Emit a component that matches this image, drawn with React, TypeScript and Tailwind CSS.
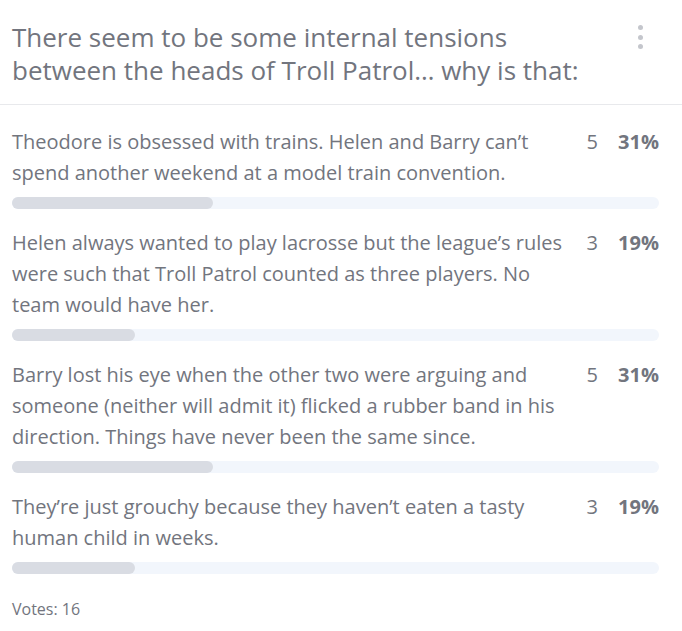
import { useState } from "react";

const options = [
  { text: "Theodore is obsessed with trains. Helen and Barry can’t spend another weekend at a model train convention.", votes: 5 },
  { text: "Helen always wanted to play lacrosse but the league’s rules were such that Troll Patrol counted as three players. No team would have her.", votes: 3 },
  { text: "Barry lost his eye when the other two were arguing and someone (neither will admit it) flicked a rubber band in his direction. Things have never been the same since.", votes: 5 },
  { text: "They’re just grouchy because they haven’t eaten a tasty human child in weeks.", votes: 3 },
];

export default function App() {
  const [menuOpen, setMenuOpen] = useState(false);
  const total = options.reduce((s, o) => s + o.votes, 0);

  return (
    <div className="w-[682px] min-h-[631px] bg-white text-[#72757e]" style={{ fontFamily: '"Open Sans", "Noto Sans", sans-serif' }}>
      <div className="flex items-start justify-between border-b border-[#e8e9ec] pl-3 pr-[39px] pt-[21px] pb-[17px]">
        <h1 className="max-w-[592px] text-[26px] leading-[33px] font-normal">
          There seem to be some internal tensions between the heads of Troll Patrol… why is that:
        </h1>
        <button onClick={() => setMenuOpen(!menuOpen)} className="mt-[4px] flex flex-col items-center gap-[4.5px]">
          <span className="w-[5px] h-[5px] rounded-full bg-[#c4c6cc]" />
          <span className="w-[5px] h-[5px] rounded-full bg-[#c4c6cc]" />
          <span className="w-[5px] h-[5px] rounded-full bg-[#c4c6cc]" />
        </button>
      </div>

      <div className="pl-3 pr-[23px] pt-[21px]">
        {options.map((o, i) => {
          const pct = Math.round((o.votes / total) * 100);
          return (
            <div key={i} className="mb-[18px]">
              <div className="flex items-start text-[20px] leading-[31px]">
                <p className="flex-1">{o.text}</p>
                <span className="w-[20px] text-right">{o.votes}</span>
                <span className="w-[61px] text-right font-bold">{pct}%</span>
              </div>
              <div className="mt-[9px] h-[12px] rounded-full bg-[#f2f6fc]">
                <div className="h-full rounded-full bg-[#d9dce3]" style={{ width: `${pct}%` }} />
              </div>
            </div>
          );
        })}
        <div className="text-[16px] pt-[5px]">Votes: {total}</div>
      </div>
    </div>
  );
}
